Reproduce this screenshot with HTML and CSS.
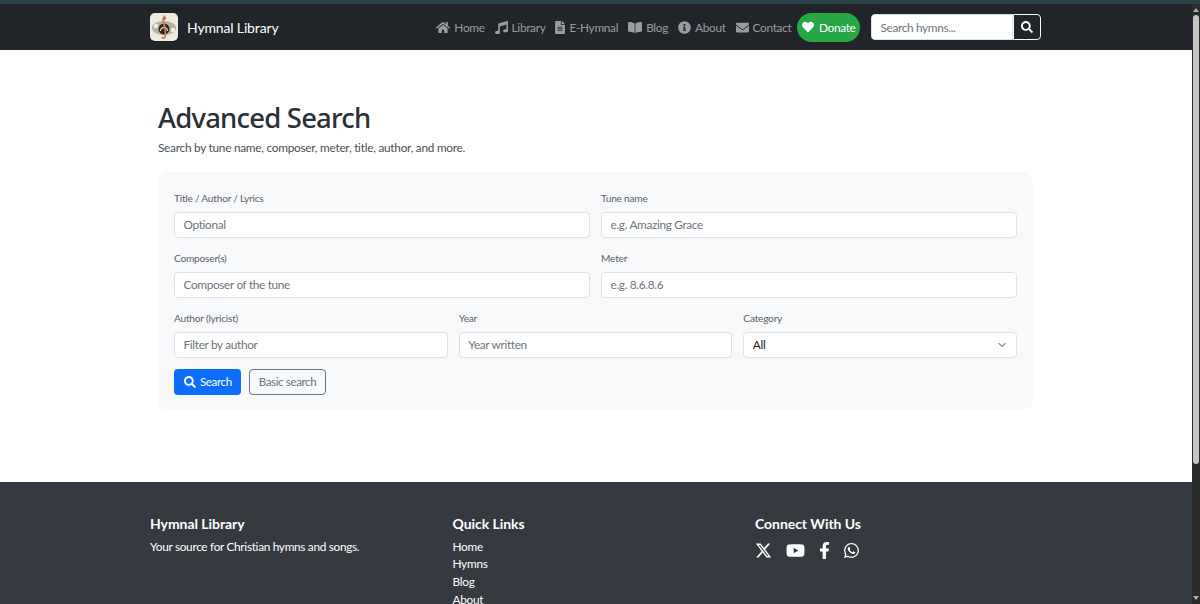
FILE: index.html
```html
<!DOCTYPE html>
<html lang="en">
<head>
    <meta charset="UTF-8">
    <meta name="viewport" content="width=device-width, initial-scale=1.0">
    <title>Advanced Search - Hymnal Library</title>
    <link rel="stylesheet" href="styles.css">
</head>
<body>
    <svg class="icon-sprite" aria-hidden="true">
        <symbol id="i-home" viewBox="0 0 576 512"><path d="M280.37 148.26L96 300.11V464a16 16 0 0 0 16 16l112.06-.29a16 16 0 0 0 15.92-16V368a16 16 0 0 1 16-16h64a16 16 0 0 1 16 16v95.64a16 16 0 0 0 16 16.05L464 480a16 16 0 0 0 16-16V300L295.67 148.26a12.19 12.19 0 0 0-15.3 0zM571.6 251.47L488 182.56V44.05a12 12 0 0 0-12-12h-56a12 12 0 0 0-12 12v72.61L318.47 43a48 48 0 0 0-61 0L4.34 251.47a12 12 0 0 0-1.6 16.9l25.5 31A12 12 0 0 0 45.15 301l235.22-193.74a12.19 12.19 0 0 1 15.3 0L530.9 301a12 12 0 0 0 16.9-1.6l25.5-31a12 12 0 0 0-1.7-16.93z"/></symbol>
        <symbol id="i-music" viewBox="0 0 512 512"><path d="M470.38 1.51L150.41 96A32 32 0 0 0 128 126.51v261.41A139 139 0 0 0 96 384c-53 0-96 28.66-96 64s43 64 96 64 96-28.66 96-64V214.32l256-75v184.61a138.4 138.4 0 0 0-32-3.93c-53 0-96 28.66-96 64s43 64 96 64 96-28.65 96-64V32a32 32 0 0 0-41.62-30.49z"/></symbol>
        <symbol id="i-file" viewBox="0 0 384 512"><path d="M224 136V0H24C10.7 0 0 10.7 0 24v464c0 13.3 10.7 24 24 24h336c13.3 0 24-10.7 24-24V160H248c-13.2 0-24-10.8-24-24zm64 236c0 6.6-5.4 12-12 12H108c-6.6 0-12-5.4-12-12v-8c0-6.6 5.4-12 12-12h168c6.6 0 12 5.4 12 12v8zm0-64c0 6.6-5.4 12-12 12H108c-6.6 0-12-5.4-12-12v-8c0-6.6 5.4-12 12-12h168c6.6 0 12 5.4 12 12v8zm0-72v8c0 6.6-5.4 12-12 12H108c-6.6 0-12-5.4-12-12v-8c0-6.6 5.4-12 12-12h168c6.6 0 12 5.4 12 12zm96-114.1v6.1H256V0h6.1c6.4 0 12.5 2.5 17 7l97.9 98c4.5 4.5 7 10.6 7 16.9z"/></symbol>
        <symbol id="i-book" viewBox="0 0 576 512"><path d="M542.22 32.05c-54.8 3.11-163.72 14.43-230.96 55.59-4.64 2.84-7.27 7.89-7.27 13.17v363.87c0 11.55 12.63 18.85 23.28 13.49 69.18-34.82 169.23-44.32 218.7-46.92 16.89-.89 30.02-14.43 30.02-30.66V62.75c.01-17.71-15.35-31.74-33.77-30.7zM264.73 87.64C197.5 46.48 88.58 35.17 33.78 32.05 15.36 31.01 0 45.04 0 62.75V400.6c0 16.24 13.13 29.78 30.02 30.66 49.49 2.6 149.59 12.11 218.77 46.95 10.62 5.35 23.21-1.94 23.21-13.46V100.63c0-5.29-2.62-10.14-7.27-12.99z"/></symbol>
        <symbol id="i-info" viewBox="0 0 512 512"><path d="M256 8C119.043 8 8 119.083 8 256c0 136.997 111.043 248 248 248s248-111.003 248-248C504 119.083 392.957 8 256 8zm0 110c23.196 0 42 18.804 42 42s-18.804 42-42 42-42-18.804-42-42 18.804-42 42-42zm56 254c0 6.627-5.373 12-12 12h-88c-6.627 0-12-5.373-12-12v-24c0-6.627 5.373-12 12-12h12v-64h-12c-6.627 0-12-5.373-12-12v-24c0-6.627 5.373-12 12-12h64c6.627 0 12 5.373 12 12v100h12c6.627 0 12 5.373 12 12v24z"/></symbol>
        <symbol id="i-mail" viewBox="0 0 512 512"><path d="M502.3 190.8c3.9-3.1 9.7-.2 9.7 4.7V400c0 26.5-21.5 48-48 48H48c-26.5 0-48-21.5-48-48V195.6c0-5 5.7-7.8 9.7-4.7 22.4 17.4 52.1 39.5 154.1 113.6 21.1 15.4 56.7 47.8 92.2 47.6 35.7.3 72-32.8 92.3-47.6 102-74.1 131.6-96.3 154-113.7zM256 320c23.2.4 56.6-29.2 73.4-41.4 132.7-96.3 142.8-104.7 173.4-128.7 5.8-4.5 9.2-11.5 9.2-18.9v-19c0-26.5-21.5-48-48-48H48C21.5 64 0 85.5 0 112v19c0 7.4 3.4 14.3 9.2 18.9 30.6 23.9 40.7 32.4 173.4 128.7 16.8 12.2 50.2 41.8 73.4 41.4z"/></symbol>
        <symbol id="i-heart" viewBox="0 0 512 512"><path d="M462.3 62.6C407.5 15.9 326 24.3 275.7 76.2L256 96.5l-19.7-20.3C186.1 24.3 104.5 15.9 49.7 62.6c-62.8 53.6-66.1 149.8-9.9 207.9l193.5 199.8c12.5 12.9 32.8 12.9 45.3 0l193.5-199.8c56.3-58.1 53-154.3-9.8-207.9z"/></symbol>
        <symbol id="i-search" viewBox="0 0 512 512"><path d="M505 442.7L405.3 343c-4.5-4.5-10.6-7-17-7H372c27.6-35.3 44-79.7 44-128C416 93.1 322.9 0 208 0S0 93.1 0 208s93.1 208 208 208c48.3 0 92.7-16.4 128-44v16.3c0 6.4 2.5 12.5 7 17l99.7 99.7c9.4 9.4 24.6 9.4 33.9 0l28.3-28.3c9.4-9.4 9.4-24.6.1-34zM208 336c-70.7 0-128-57.2-128-128 0-70.7 57.2-128 128-128 70.7 0 128 57.2 128 128 0 70.7-57.2 128-128 128z"/></symbol>
        <symbol id="i-x" viewBox="0 0 512 512"><path d="M389.2 48h70.6L305.6 224.2 487 464H345L233.7 318.6 106.5 464H35.8L200.7 275.5 26.8 48H172.4L272.9 180.9 389.2 48zM364.4 421.8h39.1L151.1 88h-42L364.4 421.8z"/></symbol>
        <symbol id="i-youtube" viewBox="0 0 576 512"><path d="M549.655 124.083c-6.281-23.65-24.787-42.276-48.284-48.597C458.781 64 288 64 288 64S117.22 64 74.629 75.486c-23.497 6.322-42.003 24.947-48.284 48.597-11.412 42.867-11.412 132.305-11.412 132.305s0 89.438 11.412 132.305c6.281 23.65 24.787 41.5 48.284 47.821C117.22 448 288 448 288 448s170.78 0 213.371-11.486c23.497-6.321 42.003-24.171 48.284-47.821 11.412-42.867 11.412-132.305 11.412-132.305s0-89.438-11.412-132.305zm-317.51 213.508V175.185l142.739 81.205-142.739 81.201z"/></symbol>
        <symbol id="i-facebook" viewBox="0 0 320 512"><path d="M279.14 288l14.22-92.66h-88.91v-60.13c0-25.35 12.42-50.06 52.24-50.06h40.42V6.26S260.43 0 225.36 0c-73.22 0-121.08 44.38-121.08 124.72v70.62H22.89V288h81.39v224h100.17V288z"/></symbol>
        <symbol id="i-whatsapp" viewBox="0 0 448 512"><path d="M380.9 97.1C339 55.1 283.2 32 223.9 32c-122.4 0-222 99.6-222 222 0 39.1 10.2 77.3 29.6 111L0 480l117.7-30.9c32.4 17.7 68.9 27 106.1 27h.1c122.3 0 224.1-99.6 224.1-222 0-59.3-25.2-115-67.1-157zm-157 341.6c-33.2 0-65.7-8.9-94-25.7l-6.7-4-69.8 18.3L72 359.2l-4.4-7c-18.5-29.4-28.2-63.3-28.2-98.2 0-101.7 82.8-184.5 184.6-184.5 49.3 0 95.6 19.2 130.4 54.1 34.8 34.9 56.2 81.2 56.1 130.5 0 101.8-84.9 184.6-186.6 184.6zm101.2-138.2c-5.5-2.8-32.8-16.2-37.9-18-5.1-1.9-8.8-2.8-12.5 2.8-3.7 5.6-14.3 18-17.6 21.8-3.2 3.7-6.5 4.2-12 1.4-32.6-16.3-54-29.1-75.5-66-5.7-9.8 5.7-9.1 16.3-30.3 1.8-3.7.9-6.9-.5-9.7-1.4-2.8-12.5-30.1-17.1-41.2-4.5-10.8-9.1-9.3-12.5-9.5-3.2-.2-6.9-.2-10.6-.2-3.7 0-9.7 1.4-14.8 6.9-5.1 5.6-19.4 19-19.4 46.3 0 27.3 19.9 53.7 22.6 57.4 2.8 3.7 39.1 59.7 94.8 83.8 35.2 15.2 49 16.5 66.6 13.9 10.7-1.6 32.8-13.4 37.4-26.4 4.6-13 4.6-24.1 3.2-26.4-1.3-2.5-5-3.9-10.5-6.6z"/></symbol>
    </svg>

    <div class="page">
        <!-- Header Navbar -->
        <nav class="navbar">
            <a href="#" class="brand">
                <svg class="brand-logo" viewBox="0 0 28 28" aria-hidden="true">
                    <defs>
                        <radialGradient id="logo-bg" cx="50%" cy="50%" r="70%">
                            <stop offset="0" stop-color="#e8e4d8"/>
                            <stop offset="1" stop-color="#f0ede2"/>
                        </radialGradient>
                    </defs>
                    <rect width="28" height="28" rx="5" fill="url(#logo-bg)"/>
                    <ellipse cx="14" cy="15" rx="12" ry="7" fill="#b5b1a3"/>
                    <circle cx="6" cy="13" r="2.2" fill="#f2eee3"/>
                    <circle cx="23" cy="17" r="2.2" fill="#f2eee3"/>
                    <circle cx="14" cy="16" r="5.5" fill="#2d2722"/>
                    <path d="M10.5 18a3.5 3.5 0 0 1 7 0" fill="none" stroke="#d9c9a8" stroke-width="1.3"/>
                    <path d="M15 3c-3 3-2 5-1 8s2 10 1 13c-1 2-3 1-3 0" fill="none" stroke="#c9815a" stroke-width="1.8"/>
                    <circle cx="14.5" cy="5.5" r="1.4" fill="#b0633a"/>
                </svg>
                <span>Hymnal Library</span>
            </a>
            <div class="nav-right">
                <div class="nav-links">
                    <a href="#"><svg class="icon icon-wide"><use href="#i-home"/></svg>Home</a>
                    <a href="#"><svg class="icon icon-square"><use href="#i-music"/></svg>Library</a>
                    <a href="#"><svg class="icon icon-file"><use href="#i-file"/></svg>E-Hymnal</a>
                    <a href="#"><svg class="icon icon-wide"><use href="#i-book"/></svg>Blog</a>
                    <a href="#"><svg class="icon icon-square"><use href="#i-info"/></svg>About</a>
                    <a href="#"><svg class="icon icon-square"><use href="#i-mail"/></svg>Contact</a>
                </div>
                <a href="#" class="donate"><svg class="icon icon-small"><use href="#i-heart"/></svg>Donate</a>
                <form class="nav-search">
                    <input type="text" placeholder="Search hymns...">
                    <button type="button" aria-label="Search"><svg class="icon icon-small"><use href="#i-search"/></svg></button>
                </form>
            </div>
        </nav>

        <!-- Main Content -->
        <main class="main-content">
            <h1>Advanced Search</h1>
            <p class="lead">Search by tune name, composer, meter, title, author, and more.</p>

            <form class="search-card">
                <div class="form-row">
                    <div class="field">
                        <label>Title / Author / Lyrics</label>
                        <input type="text" placeholder="Optional">
                    </div>
                    <div class="field">
                        <label>Tune name</label>
                        <input type="text" placeholder="e.g. Amazing Grace">
                    </div>
                </div>
                <div class="form-row">
                    <div class="field">
                        <label>Composer(s)</label>
                        <input type="text" placeholder="Composer of the tune">
                    </div>
                    <div class="field">
                        <label>Meter</label>
                        <input type="text" placeholder="e.g. 8.6.8.6">
                    </div>
                </div>
                <div class="form-row">
                    <div class="field">
                        <label>Author (lyricist)</label>
                        <input type="text" placeholder="Filter by author">
                    </div>
                    <div class="field">
                        <label>Year</label>
                        <input type="text" placeholder="Year written">
                    </div>
                    <div class="field">
                        <label>Category</label>
                        <select>
                            <option>All</option>
                        </select>
                    </div>
                </div>
                <div class="form-actions">
                    <button type="button" class="btn btn-primary"><svg class="icon icon-small"><use href="#i-search"/></svg>Search</button>
                    <a href="#" class="btn btn-outline">Basic search</a>
                </div>
            </form>
        </main>

        <!-- Footer -->
        <footer class="footer">
            <div class="footer-col">
                <h5>Hymnal Library</h5>
                <p>Your source for Christian hymns and songs.</p>
            </div>
            <div class="footer-col">
                <h5>Quick Links</h5>
                <ul>
                    <li><a href="#">Home</a></li>
                    <li><a href="#">Hymns</a></li>
                    <li><a href="#">Blog</a></li>
                    <li><a href="#">About</a></li>
                </ul>
            </div>
            <div class="footer-col">
                <h5>Connect With Us</h5>
                <div class="social">
                    <a href="#" aria-label="X"><svg class="social-x"><use href="#i-x"/></svg></a>
                    <a href="#" aria-label="YouTube"><svg class="social-yt"><use href="#i-youtube"/></svg></a>
                    <a href="#" aria-label="Facebook"><svg class="social-fb"><use href="#i-facebook"/></svg></a>
                    <a href="#" aria-label="WhatsApp"><svg class="social-wa"><use href="#i-whatsapp"/></svg></a>
                </div>
            </div>
        </footer>
    </div>

    <!-- Window scrollbar -->
    <div class="scrollbar" aria-hidden="true">
        <span class="arrow-up"></span>
        <span class="thumb"></span>
        <span class="arrow-down"></span>
    </div>
</body>
</html>
```

FILE: styles.css
```css
/* General Styling */
html, body {
    height: 100%;
    overflow: hidden;
}

body {
    font-family: Lato, "Noto Sans", sans-serif;
    font-size: 11.8px;
    letter-spacing: -0.25px;
    margin: 0;
    color: #212529;
    background-color: #fff;
    border-top: 4px solid #2a4148;
    box-sizing: border-box;
}

a {
    text-decoration: none;
}

.icon-sprite {
    display: none;
}

.icon {
    fill: currentColor;
    height: 13px;
    flex-shrink: 0;
}

.icon-wide {
    width: 14px;
}

.icon-square {
    width: 13px;
}

.icon-file {
    width: 10px;
}

.icon-small {
    width: 12px;
    height: 12px;
}

.page {
    margin-right: 8px;
}

/* Header Navbar */
.navbar {
    display: flex;
    justify-content: space-between;
    align-items: center;
    height: 46px;
    padding: 0 151px 0 150px;
    background-color: #212529;
}

.brand {
    display: flex;
    align-items: center;
    gap: 9px;
    color: #fff;
    font-size: 14px;
    letter-spacing: -0.15px;
}

.brand-logo {
    width: 28px;
    height: 28px;
}

.nav-right {
    display: flex;
    align-items: center;
    letter-spacing: -0.3px;
}

.nav-links {
    display: flex;
    align-items: center;
    gap: 10px;
    margin-right: 6px;
}

.nav-links a {
    display: flex;
    align-items: center;
    gap: 4px;
    color: rgba(255, 255, 255, 0.55);
}

.donate {
    display: flex;
    align-items: center;
    gap: 5px;
    height: 29px;
    padding: 0 4.5px;
    border-radius: 15px;
    background-color: #28a745;
    color: #fff;
}

.nav-search {
    display: flex;
    margin-left: 11px;
}

.nav-search input {
    width: 142px;
    height: 26px;
    box-sizing: border-box;
    padding: 0 8.5px;
    border: 1px solid #dee2e6;
    border-radius: 4px 0 0 4px;
    background: #fff;
    font: inherit;
    letter-spacing: -0.33px;
}

.nav-search button {
    display: flex;
    align-items: center;
    justify-content: center;
    width: 28px;
    height: 26px;
    padding: 0;
    border: 1px solid #f8f9fa;
    border-radius: 0 4px 4px 0;
    background: transparent;
    color: #fff;
}

input::placeholder {
    color: #6c757d;
    opacity: 1;
}

/* Main Content */
.main-content {
    width: 875px;
    margin: 0 auto;
    padding: 51px 0 72px;
    position: relative;
    left: -0.5px;
}

h1 {
    margin: 0 0 4px;
    font-family: "Noto Sans", sans-serif;
    font-size: 27.5px;
    font-weight: 500;
    letter-spacing: -0.8px;
    line-height: 34px;
    color: #2b3035;
}

.lead {
    margin: 0 0 15px;
    line-height: 18px;
    color: #495057;
}

.search-card {
    padding: 16px 16px 15px;
    border-radius: 10px;
    background-color: #f8f9fa;
}

.form-row {
    display: flex;
    gap: 11px;
    margin-bottom: 10px;
}

.field {
    flex: 1;
    min-width: 0;
}

.field label {
    display: block;
    height: 24px;
    line-height: 20px;
    font-size: 10.2px;
    letter-spacing: -0.25px;
    color: #5c636a;
}

.field input, .field select {
    display: block;
    width: 100%;
    height: 26px;
    box-sizing: border-box;
    padding: 0 8.5px 2px;
    border: 1px solid #dee2e6;
    border-radius: 4px;
    background-color: #fff;
    font: inherit;
    letter-spacing: -0.33px;
    color: #212529;
}

.field select {
    appearance: none;
    background-image: url("data:image/svg+xml,%3csvg xmlns='http://www.w3.org/2000/svg' viewBox='0 0 16 16'%3e%3cpath fill='none' stroke='%23343a40' stroke-linecap='round' stroke-linejoin='round' stroke-width='2' d='m2 5 6 6 6-6'/%3e%3c/svg%3e");
    background-repeat: no-repeat;
    background-position: right 9px center;
    background-size: 10px 8px;
}

.form-actions {
    display: flex;
    gap: 8px;
    margin-top: 11px;
}

.btn {
    display: flex;
    align-items: center;
    gap: 4px;
    height: 26px;
    box-sizing: border-box;
    padding: 0 9px 2px;
    border-radius: 4px;
    border: 1px solid transparent;
    font: inherit;
    font-size: 11.6px;
    letter-spacing: -0.4px;
}

.btn-primary {
    padding-right: 8px;
    background-color: #0d6efd;
    color: #fff;
}

.btn-primary .icon {
    margin-top: 2px;
}

.btn-outline {
    border-color: #6c757d;
    color: #6c757d;
}

/* Footer */
.footer {
    display: grid;
    grid-template-columns: repeat(3, 302.5px);
    height: 200px;
    padding: 32px 0 0 150px;
    background-color: #343a40;
    color: #fff;
}

.footer h5 {
    margin: 0 0 3.5px;
    font-size: 14px;
    font-weight: 700;
    letter-spacing: -0.05px;
    line-height: 20px;
}

.footer p {
    margin: 0;
    line-height: 18px;
    letter-spacing: -0.3px;
}

.footer ul {
    margin: 0;
    padding: 0;
    list-style: none;
}

.footer li {
    height: 17.7px;
    line-height: 18px;
}

.footer a {
    color: #fff;
}

.social {
    display: flex;
    align-items: center;
    gap: 14px;
    margin-top: 8px;
}

.social a {
    display: flex;
}

.social svg {
    height: 17px;
    fill: currentColor;
}

.social-x {
    width: 17px;
}

.social-yt {
    width: 19px;
}

.social-fb {
    width: 11px;
}

.social-wa {
    width: 15px;
}

/* Window scrollbar */
.scrollbar {
    position: fixed;
    top: 4px;
    right: 0;
    bottom: 0;
    width: 8px;
    display: flex;
    flex-direction: column;
    align-items: center;
    background-color: #2b2b2b;
}

.thumb {
    width: 6px;
    height: 449px;
    margin-top: 3px;
    border-radius: 3px;
    background-color: #c4c4c4;
}

.arrow-up, .arrow-down {
    width: 0;
    height: 0;
    border-left: 3px solid transparent;
    border-right: 3px solid transparent;
}

.arrow-up {
    margin-top: 4px;
    border-bottom: 4px solid #b0b0b0;
}

.arrow-down {
    margin-top: auto;
    margin-bottom: 4px;
    border-top: 4px solid #b0b0b0;
}
```
